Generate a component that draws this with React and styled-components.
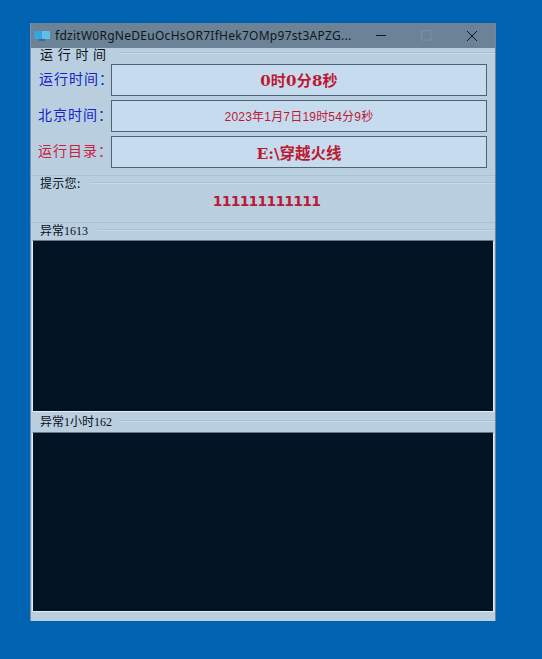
import React from "react";
import styled, { createGlobalStyle } from "styled-components";

const Global = createGlobalStyle`
  html, body { margin: 0; padding: 0; background: #0063b1; }
  #root { width: 542px; height: 659px; overflow: hidden; }
`;
const CJK = `"Noto Sans CJK SC", "Noto Sans", sans-serif`;
const Desktop = styled.div`
  width: 542px; height: 659px; background: #0063b1; padding: 23px 0 0 30px; box-sizing: border-box;
`;
const Window = styled.div`
  width: 466px; height: 598px; box-sizing: border-box; display: flex; flex-direction: column;
  background: #b9cfe0; border-left: 1px solid #7b92a8; border-right: 1px solid #6f8599;
`;
const TitleBar = styled.div`
  height: 25px; flex: none; background: #6c8296; display: flex; align-items: center;
  padding-left: 3px; color: #0d1720; font: 12px "Noto Sans", sans-serif;
`;
const AppIcon = styled.svg`width: 16px; height: 12px; margin-right: 5px; flex: none;`;
const TitleText = styled.span`width: 304px; flex: none; white-space: nowrap; letter-spacing: 0.27px;`;
const WinBtn = styled.div`
  width: 45px; height: 25px; display: flex; align-items: center; justify-content: center; flex: none;
`;
const Legend = styled.div`
  display: flex; align-items: center; height: 12px; padding: 0 0 2px 9px; box-sizing: border-box; flex: none;
  color: #0a0f16; font: 13px ${CJK}; letter-spacing: 4.7px;
`;
const LegendLine = styled.span`
  flex: 1; height: 1px; margin-left: 9px; background: #aac1d4; border-bottom: 1px solid #c7d9e7;
`;
const Fields = styled.div`
  display: flex; flex-direction: column; gap: 4px; padding: 4px 8px 0 7px; flex: none;
`;
const Row = styled.div`display: flex; align-items: center; height: 32px;`;
const Label = styled.div`
  width: 73px; padding: 0 0 4px ${p => p.$indent || 0}px; box-sizing: border-box; flex: none; white-space: nowrap;
  color: ${p => p.$color}; font: 14px ${CJK}; letter-spacing: 1px;
`;
const Value = styled.div`
  flex: 1; height: 32px; padding-bottom: 1px; box-sizing: border-box; border: 1px solid #4d6478; background: #c6dcee;
  display: flex; align-items: center; justify-content: center; color: #bc1a33;
  font: ${p => p.$bold ? 700 : 400} ${p => p.$size}px ${p => p.$bold ? `"DejaVu Serif", ${CJK}` : `"Liberation Sans", ${CJK}`};
  letter-spacing: ${p => p.$spacing || 0}px;
`;
const HintHead = styled.div`
  margin-top: 7px; flex: none; height: 14px; box-sizing: border-box; border-top: 1px solid #aac1d4;
  padding: 0 0 0 9px; display: flex; align-items: center; font: 12px ${CJK}; letter-spacing: 0.3px; color: #0a0f16;
`;
const HintMessage = styled.div`
  height: 33px; padding: 0 0 10px 7px; box-sizing: border-box; display: flex; align-items: center; justify-content: center; flex: none;
  color: #bc1a33; font: 700 14px "DejaVu Sans", sans-serif; letter-spacing: -0.8px;
`;
const GroupHead = styled.div`
  height: 18px; flex: none; box-sizing: border-box; border-top: 1px solid #aac1d4;
  display: flex; align-items: center; padding: 0 0 3px 9px; color: #0a0f16;
  font: 12px "Liberation Serif", ${CJK};
`;
const Console = styled.div`
  flex: none; height: ${p => p.$h}px; margin: 0 1px; box-sizing: border-box; background: #021424;
  border: 1px solid #e3edf4; border-top-color: #5f7890;
`;
const LowerHead = styled.div`
  height: 20px; flex: none; box-sizing: border-box; display: flex; align-items: center; padding: 0 0 2px 9px; color: #0a0f16;
  font: 12px "Liberation Serif", ${CJK};
`;

export default function App() {
  return (
    <Desktop>
      <Global />
      <Window>
        <TitleBar>
          <AppIcon viewBox="0 0 16 12">
            <rect x="0" y="1" width="16" height="8" fill="#38a3dc" />
            <rect x="8" y="1" width="8" height="8" fill="#5ec0ea" />
            <rect x="5" y="9" width="6" height="2" fill="#2a6f9c" />
          </AppIcon>
          <TitleText>fdzitW0RgNeDEuOcHsOR7IfHek7OMp97st3APZG...</TitleText>
          <WinBtn>
            <svg width="11" height="11" viewBox="0 0 11 11"><path d="M0 5.5h10" stroke="#0f1a24" strokeWidth="1" /></svg>
          </WinBtn>
          <WinBtn>
            <svg width="11" height="11" viewBox="0 0 11 11"><rect x="0.5" y="0.5" width="9.5" height="9.5" fill="none" stroke="#7d90a2" /></svg>
          </WinBtn>
          <WinBtn>
            <svg width="12" height="12" viewBox="0 0 12 12"><path d="M1 1l10 10M11 1L1 11" stroke="#0f1a24" strokeWidth="1" /></svg>
          </WinBtn>
        </TitleBar>
        <Legend>运行时间<LegendLine /></Legend>
        <Fields>
          <Row>
            <Label $color="#1223c8" $indent={1}>运行时间：</Label>
            <Value $size={15} $spacing={0.2} $bold>0时0分8秒</Value>
          </Row>
          <Row>
            <Label $color="#1223c8">北京时间：</Label>
            <Value $size={12} $spacing={0.2}>2023年1月7日19时54分9秒</Value>
          </Row>
          <Row>
            <Label $color="#c9213f">运行目录：</Label>
            <Value $size={15.5} $bold>E:\穿越火线</Value>
          </Row>
        </Fields>
        <HintHead>提示您:<LegendLine /></HintHead>
        <HintMessage>111111111111</HintMessage>
        <GroupHead>异常1613<LegendLine /></GroupHead>
        <Console $h={172} />
        <LowerHead>异常1小时162<LegendLine /></LowerHead>
        <Console $h={180} />
      </Window>
    </Desktop>
  );
}
